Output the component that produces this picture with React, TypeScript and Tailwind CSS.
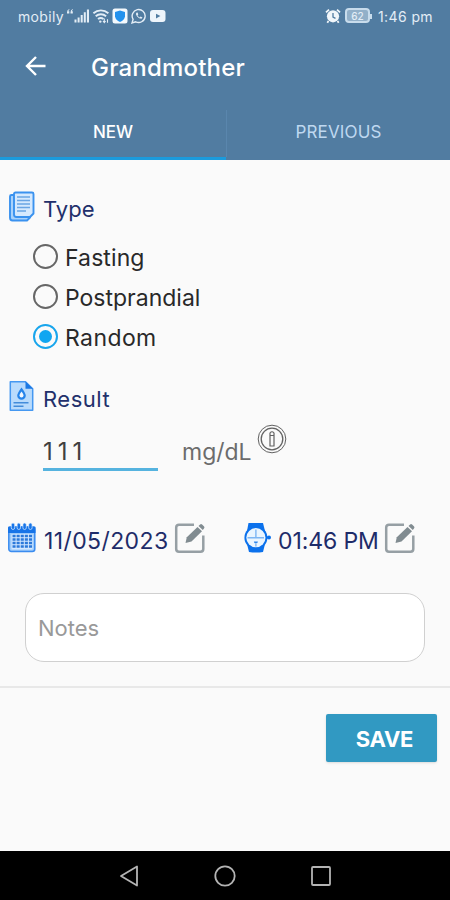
import React from "react";

const StatusBar = () => {
  return (
    <div className="flex h-[33px] items-center pl-[18px] pr-[15px] text-[14px] leading-8 text-[#e3edf6]">
      <span className="w-[48px] tracking-[0.35px]">mobily</span>
      {/* Signal */}
      <svg className="mb-px h-4 w-[26px] shrink-0" viewBox="0 0 26 16" fill="currentColor">
        <path d="M1 4.300q0-2.600 2.300-3.300v1.100q-1 .4-1 1.100h1v2.300H1zM4.500 4.300q0-2.600 2.300-3.300v1.100q-1 .4-1 1.100h1v2.300H4.500z" />
        <path d="M8.500 11.500h2v3h-2zM11.600 9.500h2v5h-2zM14.700 7h2v7.500h-2zM17.800 4.300h2v10.200h-2zM20.900 1.500h2.100v13h-2.100z" />
      </svg>
      {/* Wifi */}
      <svg className="mb-px h-4 w-[18px] shrink-0" viewBox="0 0 18 16" fill="none" stroke="currentColor" strokeWidth="1.900">
        <path d="M1.400 5.200a11.500 11.500 0 0 1 15 0M3.700 8.200a8 8 0 0 1 10.400 0M6 11a4.600 4.600 0 0 1 5.500-.1" />
        <circle cx="8.300" cy="13.600" r="1.200" fill="currentColor" stroke="none" />
        <path d="M12.300 10.500v4M11 13l1.300 1.700L13.600 13M15.500 14.700v-3.500" strokeWidth="1.100" />
      </svg>
      {/* Shield */}
      <svg className="mb-px ml-[2px] h-4 w-4 shrink-0" viewBox="0 0 16 16">
        <rect x=".5" y=".5" width="15" height="15" rx="2.500" fill="#f4f9fd" />
        <path d="M8 2.500 13 4v4.500q-.7 3.500-5 5.500Q3.700 12 3 8.500V4z" fill="#2492ed" />
      </svg>
      {/* Whatsapp */}
      <svg className="mb-px ml-[3px] h-4 w-4 shrink-0" viewBox="0 0 16 16" fill="none" stroke="currentColor" strokeWidth="1.400">
        <path d="M1 14.900 2.100 11.400A6.500 6.500 0 1 1 4.700 13.800z" />
        <path d="M5.300 4.700q-1 1.300.6 3.500 2.300 2.700 4.600 2.600l1-1.400-1.900-1-1 1Q7.100 8.600 6.500 7.300l.8-.9-.7-1.800z" fill="currentColor" stroke="none" />
      </svg>
      {/* Youtube */}
      <svg className="mb-px ml-[2px] h-4 w-[18px] shrink-0" viewBox="0 0 18 16">
        <rect x="1" y="2" width="15.500" height="12" rx="3" fill="#eef5fb" />
        <path d="m7 5.700 4.400 2.400L7 10.500z" fill="#517ca1" />
      </svg>
      <div className="ml-auto flex items-center">
        {/* Alarm */}
        <svg className="mb-px h-4 w-4" viewBox="0 0 16 16" fill="none">
          <circle cx="8" cy="8.300" r="6.100" fill="#f1f6fa" />
          <path d="M1 4.300 4 1.600M15 4.300l-3-2.700M3.500 13l-1.200 1.700M12.500 13l1.200 1.700" stroke="#f1f6fa" strokeWidth="1.800" />
          <path d="M8 5v4l2.500 1.300" stroke="#517ca1" strokeWidth="1.300" />
        </svg>
        <div className="mb-[2px] ml-1 flex h-[15px] w-[25px] items-center justify-center rounded-[4px] border-2 border-[#c8dcec] bg-[#92b0c9] text-[10px] leading-none font-medium">
          62
        </div>
        <div className="mb-px h-[5px] w-[2px] bg-[#c8dcec]" />
        <span className="ml-[6px] w-[57px] tracking-[0.4px] whitespace-nowrap">1:46 pm</span>
      </div>
    </div>
  );
};

const TypeIcon = () => (
  <svg className="h-[32px] w-[28px]" viewBox="0 0 28 32" fill="none" stroke="#3a92ef" strokeWidth="1.900" strokeLinejoin="round">
    <path d="M7 4H4.500Q3 4 3 5.500v21Q3 29.500 5.500 29.500H20l3.500-3.500" fill="#a9d2fb" />
    <path d="M8.500 1.500H25q1.500 0 1.500 1.500v19.500L23 26H9.500Q7 26 7 23.500V3q0-1.500 1.500-1.500z" fill="#d5e9fe" />
    <path d="M10 6h13M10 9.500h13M10 13h13M10 16.500h13M10 20h9" stroke="#6aa5e4" strokeWidth="1.400" />
  </svg>
);

const ResultIcon = () => (
  <svg className="h-[32px] w-[28px]" viewBox="0 0 28 32" fill="none">
    <path d="M3.300 1.700H18.500l7.200 7v21.500H3.300z" fill="#b9dbfc" stroke="#4598f1" strokeWidth="1.500" strokeLinejoin="round" />
    <path d="M18.500 1.500v7.300H26z" fill="#1c79e4" />
    <path d="M14.500 7.500q-4.300 5.700-4.300 8a4.300 4.300 0 0 0 8.600 0q0-2.300-4.300-8z" fill="#2584ea" />
    <path d="M14.500 11.500q-2 2.500-2 4a2 2 0 0 0 4 0q0-1.500-2-4z" fill="#f2f8ff" />
    <path d="M6.500 22.800h15M6.500 26.200h10" stroke="#438cda" strokeWidth="1.500" />
  </svg>
);

const CalendarIcon = () => (
  <svg className="h-[32px] w-[30px]" viewBox="0 0 30 32">
    <rect x="1.800" y="5" width="26" height="24.500" rx="2.500" fill="#9ccafa" stroke="#3a8cf0" strokeWidth="1.500" />
    <path d="M1 5.500q0-1 1-1h25.500q1 0 1 1V11H1z" fill="#1774e8" />
    {[6, 11.8, 17.6, 23.4].map((x) => (
      <rect key={x} x={x - 1.7} y="1" width="3.400" height="6.500" rx="1.700" fill="#1774e8" stroke="#e1f0ff" strokeWidth=".7" />
    ))}
    <rect x="4.500" y="12" width="21" height="15.500" fill="#d5e9ff" />
    {[14, 17.5, 21, 24.5].map((y) => (
      <path key={y} d={`M5.500 ${y}h19.500`} stroke="#2b79da" strokeWidth="2.400" strokeDasharray="3.100 1" />
    ))}
  </svg>
);

const WatchIcon = () => (
  <svg className="h-[32px] w-[30px]" viewBox="0 0 30 32">
    <path d="M5.500 1h14.500l2 8v13l-2 8q-7 1-14 0L4 22V9z" fill="#0b71ec" />
    <circle cx="12.900" cy="15.700" r="11.500" fill="#0b71ec" />
    <path d="M23 14.500h2v2h-2z" fill="#0b71ec" />
    <circle cx="26" cy="15.500" r="2" fill="#0b71ec" />
    <circle cx="12.900" cy="15.700" r="9.600" fill="#eaf5ff" />
    <path d="M12.900 7.500v9M4.500 15.700h16.500M12.900 22v2.500" stroke="#7db6f4" strokeWidth="1.400" />
    <path d="M10.900 19.500h4q0 2-2 2t-2-2z" fill="#2f86ec" />
  </svg>
);

const EditIcon = () => (
  <svg className="h-[32px] w-[32px]" viewBox="0 0 32 32" fill="none">
    <path d="M20 2.700H5Q2.200 2.700 2.200 5.500V27q0 2.700 2.800 2.700h21.500q2.800 0 2.800-2.700V13.500" stroke="#969fa4" strokeWidth="2.500" />
    <path d="m11.500 21 1.300-5.700L23.500 5l4.500 4.300-10.500 10.200z" fill="#818c91" />
    <path d="m24.500 4 1.600-1.600q1-.8 2 .1l2 2q.8 1-.1 2L28.800 8.100z" fill="#818c91" />
  </svg>
);

const Option = ({ label, checked, tracking }: { label: string; checked?: boolean; tracking: string }) => (
  <label className="flex h-10 items-center">
    <span
      className={`mb-[2px] flex h-[25px] w-[25px] items-center justify-center rounded-full border-2 ${
        checked ? "border-[#18a5ec]" : "border-[#666]"
      }`}
    >
      {checked && <span className="h-[13px] w-[13px] rounded-full bg-[#10a6f1]" />}
    </span>
    <span className={`ml-[7px] pt-[2px] text-[23px] leading-[38px] text-[#292929] ${tracking}`}>{label}</span>
  </label>
);

const App = () => {
  return (
    <div className="flex h-[900px] w-[450px] flex-col overflow-hidden bg-[#fafafa] font-['Inter','Liberation_Sans',sans-serif]">
      {/* Header */}
      <header className="flex h-[160px] shrink-0 flex-col bg-[#517ca1] text-white">
        <StatusBar />
        <div className="flex h-[69px] items-center pl-[25px]">
          <svg className="mb-1 h-[22px] w-[22px]" viewBox="0 0 22 22" fill="none" stroke="white" strokeWidth="2.400">
            <path d="M20.500 11H2.500M11 2l-9 9 9 9" />
          </svg>
          <h1 className="ml-[44px] text-[24px] leading-[68px] font-medium tracking-[0.2px]">Grandmother</h1>
        </div>
        <nav className="flex h-[58px] text-center text-[17px]">
          <div className="w-[226px] border-b-[3px] border-[#1b9bdd] pt-px leading-[58px] font-medium">NEW</div>
          <div className="mt-2 h-[47px] w-px bg-[#5a86ad]" />
          <div className="flex-1 pt-px leading-[58px] tracking-[0.15px] text-[#bfd8f0]">PREVIOUS</div>
        </nav>
      </header>

      <main className="flex h-[526px] shrink-0 flex-col">
        {/* Type */}
        <div className="mt-[31px] flex h-8 items-center pl-[7px]">
          <TypeIcon />
          <span className="ml-2 pt-1 text-[22px] leading-7 text-[#22306b]">Type</span>
        </div>
        <div className="mt-[14px] flex flex-col pl-[33px]">
          <Option label="Fasting" tracking="tracking-[0.1px]" />
          <Option label="Postprandial" tracking="tracking-[0px]" />
          <Option label="Random" checked tracking="tracking-[0.4px]" />
        </div>

        {/* Result */}
        <div className="mt-[23px] flex h-8 items-center pl-[7px]">
          <ResultIcon />
          <span className="ml-2 pt-[6px] text-[22px] leading-7 tracking-[0.5px] text-[#22306b]">Result</span>
        </div>
        <div className="mt-[9px] flex h-[50px] pl-[43px]">
          <div className="h-[50px] w-[115px] border-b-[3px] border-[#55b3df] pt-[12px] text-[24px] leading-[38px] tracking-[5px] text-[#404040]">
            111
          </div>
          <span className="ml-6 w-[71px] pt-[12px] text-[23px] leading-[38px] text-[#6c6c6c]">mg/dL</span>
          <svg className="ml-1 mt-[3px] h-[30px] w-[30px]" viewBox="0 0 30 30" fill="none" stroke="#626262">
            <circle cx="15" cy="15" r="13.800" />
            <circle cx="15" cy="15" r="10.800" strokeWidth="1.300" />
            <path d="M13 11.500h4V22h-4zM13 11.500V9q2-2.500 4 0v2.500" strokeWidth="1.200" />
          </svg>
        </div>

        {/* Date and time */}
        <div className="mt-[51px] flex h-8 items-center pl-[7px] text-[23px] text-[#1e2c69]">
          <CalendarIcon />
          <span className="ml-[7px] w-[130px] pt-[6px] leading-7 tracking-[0.4px]">11/05/2023</span>
          <EditIcon />
          <span className="ml-[37px] flex">
            <WatchIcon />
          </span>
          <span className="ml-[5px] w-[106px] pt-[6px] leading-7 tracking-[-0.1px] whitespace-nowrap">01:46 PM</span>
          <EditIcon />
        </div>

        {/* Notes */}
        <div className="mx-[25px] mt-[39px] h-[69px] rounded-[19px] border border-[#d0d0d0] bg-white pl-3 text-[22px] leading-[69px] text-[#999]">
          Notes
        </div>
      </main>

      <footer className="flex h-[165px] shrink-0 justify-end border-t-2 border-[#e8e8e8] pr-[13px] pt-[26px]">
        <button className="h-[48px] w-[111px] rounded-[2px] bg-[#3199c2] pl-[6px] pt-[2px] text-[22px] font-bold tracking-[-0.3px] text-white shadow-sm">
          SAVE
        </button>
      </footer>

      {/* System navigation */}
      <div className="flex h-[49px] items-center justify-between bg-black pl-[119px] pr-[119px]">
        <svg className="h-[22px] w-5" viewBox="0 0 20 22" fill="none" stroke="#b4b4b4" strokeWidth="1.800" strokeLinejoin="round">
          <path d="M18 1.500v19L2 11z" />
        </svg>
        <svg className="h-[22px] w-[22px]" viewBox="0 0 22 22" fill="none" stroke="#b4b4b4" strokeWidth="1.800">
          <circle cx="11" cy="11" r="9.700" />
        </svg>
        <svg className="h-5 w-5" viewBox="0 0 20 20" fill="none" stroke="#b4b4b4" strokeWidth="1.800">
          <rect x="1" y="1" width="18" height="18" rx="1" />
        </svg>
      </div>
    </div>
  );
};

export default App;
